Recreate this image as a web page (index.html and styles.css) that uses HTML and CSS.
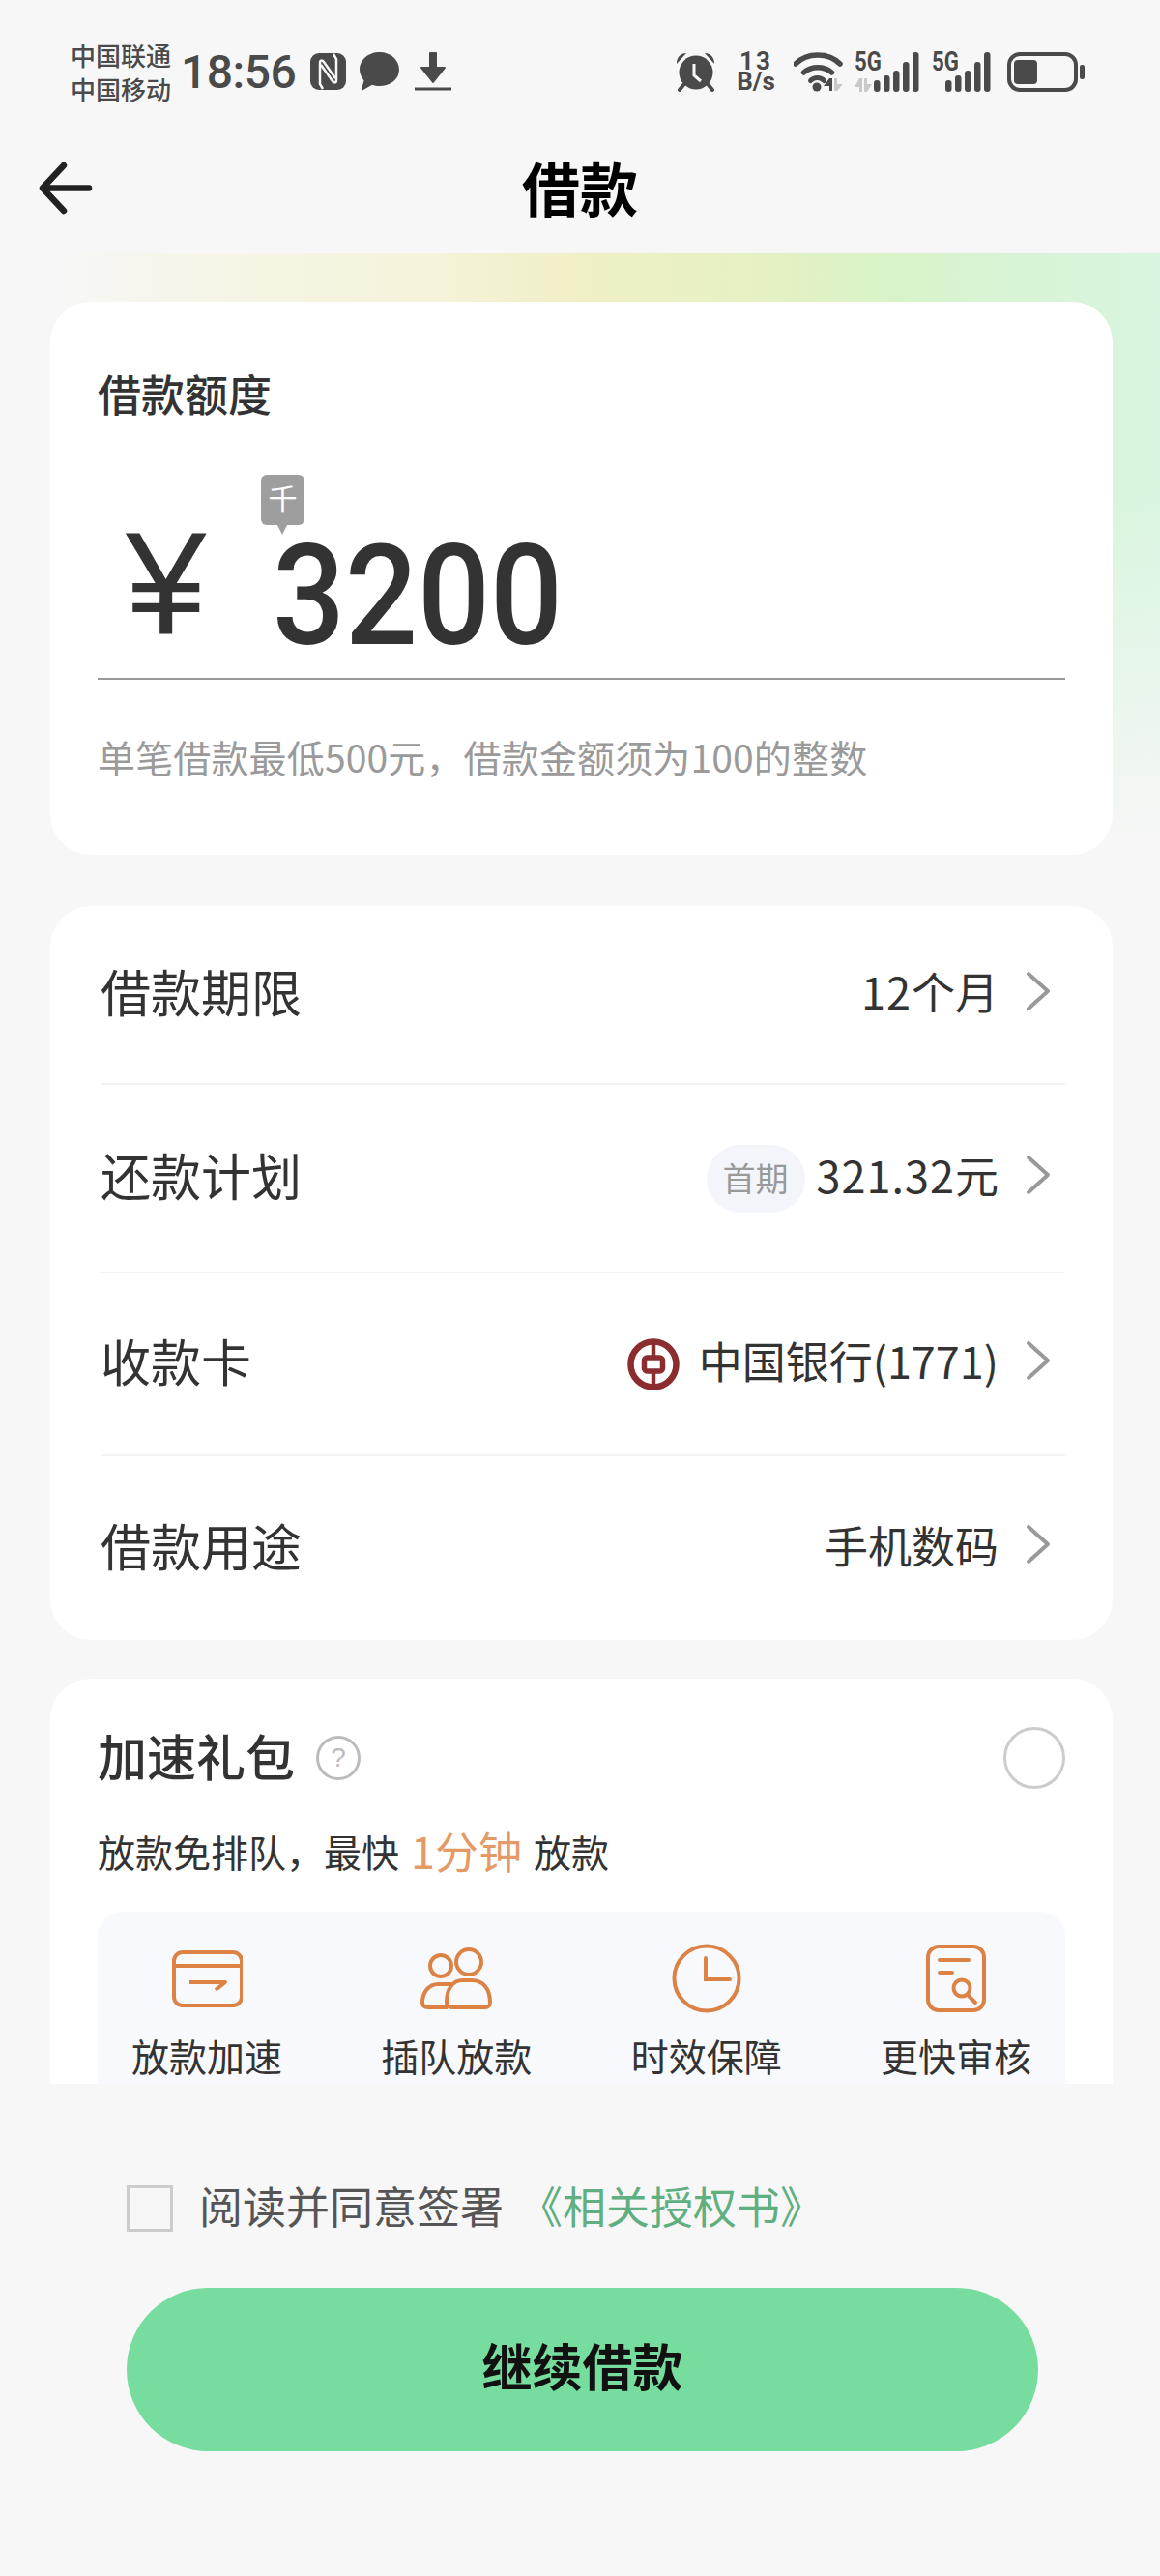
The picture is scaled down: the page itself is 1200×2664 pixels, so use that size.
FILE: index.html
```html
<!DOCTYPE html>
<html lang="zh-CN">
<head>
  <meta charset="UTF-8">
  <title>借款</title>
  <meta name="viewport" content="width=device-width,initial-scale=1,user-scalable=no"/>
  <link rel="stylesheet" href="styles.css">
</head>
<body>
<div class="status">
  <div class="carrier">
    <div>中国联通</div>
    <div>中国移动</div>
  </div>
  <div class="time">18:56</div>
  <svg class="ic-nfc" width="37" height="38" viewBox="0 0 37 38">
    <rect width="37" height="38" rx="9" fill="#4a4a4a"/>
    <path d="M13 37l-3-5V10c0-3 2-3 4-1l12 17" fill="none" stroke="#f7f7f7" stroke-width="2.500"/>
    <path d="M24 1l3 5v22c0 3-2 3-4 1L11 12" fill="none" stroke="#f7f7f7" stroke-width="2.500"/>
  </svg>
  <svg class="ic-msg" width="41" height="40" viewBox="0 0 41 40">
    <path d="M20.500 0C32 0 41 8 41 18S32 35 20.500 35c-2.500 0-5-.3-7.500-1.200L3 39.500c-1 .5-1.500 0-1-1l2.500-9C2 26 0 22 0 18 0 8 9 0 20.500 0z" fill="#4a4a4a"/>
  </svg>
  <svg class="ic-down" width="38" height="40" viewBox="0 0 38 40">
    <path d="M16 1h6v15h9L19 31 7 16h9z" fill="#4a4a4a" stroke="#4a4a4a" stroke-width="2" stroke-linejoin="round"/>
    <rect y="36.500" width="38" height="3" fill="#4a4a4a"/>
  </svg>
  <div class="status-right">
    <svg class="ic-alarm" width="41" height="41" viewBox="0 0 41 41">
      <circle cx="21" cy="21" r="17.500" fill="#4a4a4a"/>
      <path d="M1 12C1 5 5 1 11 1zM40 12C40 5 36 1 30 1z" fill="#4a4a4a"/>
      <path d="M8 34l-4 5M34 34l4 5" stroke="#4a4a4a" stroke-width="4" fill="none" stroke-linecap="round"/>
      <path d="M19 12v12l7 6" stroke="#f7f7f7" stroke-width="3" fill="none"/>
    </svg>
    <div class="speed">
      <div class="speed-num">13</div>
      <div>B/s</div>
    </div>
    <svg class="ic-wifi" width="52" height="41" viewBox="0 0 52 41">
      <path d="M2 12C14 0 36 0 48 12" fill="none" stroke="#4a4a4a" stroke-width="5.500" stroke-linecap="round"/>
      <path d="M10.500 21c8-7 21-7 29 0" fill="none" stroke="#4a4a4a" stroke-width="5.500" stroke-linecap="round"/>
      <path d="M17.500 29.500c4-4 10-4 14 0" fill="none" stroke="#4a4a4a" stroke-width="5" stroke-linecap="round"/>
      <circle cx="24" cy="36" r="4.500" fill="#4a4a4a"/>
      <path d="M37 27h3v13h-3v-5h-6z" fill="#4a4a4a"/>
      <path d="M42 27h3v6h6l-6 7h-3z" fill="#c9c9c9"/>
    </svg>
    <div class="sim sim-first">
      <span class="sim-text">5G</span>
      <svg width="67" height="41" viewBox="0 0 67 41">
        <path d="M5 27h3v14H5v-5H0z" fill="#c9c9c9"/>
        <path d="M10 27h3v6h5l-5 8h-3z" fill="#c9c9c9"/>
        <rect x="20" y="29" width="6.500" height="12" rx="3" fill="#4a4a4a"/>
        <rect x="30" y="24" width="6.500" height="17" rx="3" fill="#4a4a4a"/>
        <rect x="40" y="19" width="6.500" height="22" rx="3" fill="#4a4a4a"/>
        <rect x="50" y="10" width="6.500" height="31" rx="3" fill="#4a4a4a"/>
        <rect x="60" y="0" width="6.500" height="41" rx="3" fill="#4a4a4a"/>
      </svg>
    </div>
    <div class="sim sim-second">
      <span class="sim-text">5G</span>
      <svg width="61" height="41" viewBox="0 0 61 41">
        <rect x="14" y="29" width="6.500" height="12" rx="3" fill="#4a4a4a"/>
        <rect x="24" y="24" width="6.500" height="17" rx="3" fill="#4a4a4a"/>
        <rect x="34" y="19" width="6.500" height="22" rx="3" fill="#4a4a4a"/>
        <rect x="44" y="10" width="6.500" height="31" rx="3" fill="#4a4a4a"/>
        <rect x="54" y="0" width="6.500" height="41" rx="3" fill="#4a4a4a"/>
      </svg>
    </div>
    <svg class="ic-battery" width="81" height="41" viewBox="0 0 81 41">
      <rect x="3" y="2" width="69" height="37" rx="11" fill="none" stroke="#4a4a4a" stroke-width="4"/>
      <rect x="8" y="8" width="24" height="25" rx="4" fill="#4a4a4a"/>
      <rect x="76" y="13" width="5" height="15" rx="2" fill="#4a4a4a"/>
    </svg>
  </div>
</div>

<div class="nav">
  <svg class="back" width="56" height="56" viewBox="0 0 56 56">
    <path d="M52 26.500H5M26 3L4 26.500 26 50" fill="none" stroke="#222" stroke-width="6.500" stroke-linecap="round" stroke-linejoin="round"/>
  </svg>
  <div class="nav-title">借款</div>
</div>

<div class="main">
  <div class="card quota">
    <div class="quota-title">借款额度</div>
    <div class="amount">
      <span class="yen">¥</span>
      <div class="num-box">
        <div class="num">3200</div>
        <span class="unit">千</span>
      </div>
    </div>
    <div class="hint">单笔借款最低500元，借款金额须为100的整数</div>
  </div>

  <div class="card rows">
    <div class="row">
      <span class="row-label">借款期限</span>
      <span class="row-value"><span class="digits">12</span>个月</span>
      <svg class="arrow" width="26" height="42" viewBox="0 0 26 42"><path d="M3 3l20 18L3 39" fill="none" stroke="#999" stroke-width="4" stroke-linecap="round" stroke-linejoin="round"/></svg>
    </div>
    <div class="row">
      <span class="row-label">还款计划</span>
      <span class="tag">首期</span>
      <span class="row-value"><span class="digits">321.32</span>元</span>
      <svg class="arrow" width="26" height="42" viewBox="0 0 26 42"><path d="M3 3l20 18L3 39" fill="none" stroke="#999" stroke-width="4" stroke-linecap="round" stroke-linejoin="round"/></svg>
    </div>
    <div class="row">
      <span class="row-label">收款卡</span>
      <svg class="bank" width="54" height="54" viewBox="0 0 54 54">
        <circle cx="27" cy="27" r="23.500" fill="none" stroke="#8b2d2f" stroke-width="6.500"/>
        <rect x="17.500" y="20" width="19" height="14" rx="3" fill="none" stroke="#8b2d2f" stroke-width="5.500"/>
        <path d="M27 3v15M27 36v15" stroke="#8b2d2f" stroke-width="4.500"/>
      </svg>
      <span class="row-value">中国银行(1771)</span>
      <svg class="arrow" width="26" height="42" viewBox="0 0 26 42"><path d="M3 3l20 18L3 39" fill="none" stroke="#999" stroke-width="4" stroke-linecap="round" stroke-linejoin="round"/></svg>
    </div>
    <div class="row">
      <span class="row-label">借款用途</span>
      <span class="row-value">手机数码</span>
      <svg class="arrow" width="26" height="42" viewBox="0 0 26 42"><path d="M3 3l20 18L3 39" fill="none" stroke="#999" stroke-width="4" stroke-linecap="round" stroke-linejoin="round"/></svg>
    </div>
  </div>

  <div class="card gift">
    <div class="gift-head">
      <span class="gift-title">加速礼包</span>
      <span class="help">?</span>
      <span class="radio"></span>
    </div>
    <div class="gift-sub">放款免排队，最快<em>1分钟</em>放款</div>
    <div class="panel">
      <div class="perk">
        <svg width="74" height="72" viewBox="0 0 74 72">
          <rect x="3" y="9" width="70" height="55" rx="9" fill="none" stroke="#dd8245" stroke-width="4"/>
          <path d="M3 23h70" stroke="#dd8245" stroke-width="4"/>
          <path d="M19 40h37l-10 8" fill="none" stroke="#dd8245" stroke-width="4" stroke-linejoin="round"/>
        </svg>
        <div>放款加速</div>
      </div>
      <div class="perk">
        <svg width="74" height="72" viewBox="0 0 74 72">
          <circle cx="21" cy="23" r="11" fill="none" stroke="#dd8245" stroke-width="4"/>
          <circle cx="50" cy="19" r="13" fill="none" stroke="#dd8245" stroke-width="4"/>
          <path d="M28 66H8c-4 0-6-2-6-5 0-11 7-19 16-19h14" fill="none" stroke="#dd8245" stroke-width="4"/>
          <path d="M33 66c-4 0-6-2-6-5 0-14 6-23 17-23h9c12 0 19 9 19 23 0 3-2 5-5 5z" fill="none" stroke="#dd8245" stroke-width="4"/>
        </svg>
        <div>插队放款</div>
      </div>
      <div class="perk">
        <svg width="74" height="72" viewBox="0 0 74 72">
          <circle cx="37" cy="36" r="33.500" fill="none" stroke="#dd8245" stroke-width="4"/>
          <path d="M36 15v22h25" fill="none" stroke="#dd8245" stroke-width="4" stroke-linecap="round"/>
        </svg>
        <div>时效保障</div>
      </div>
      <div class="perk">
        <svg width="74" height="72" viewBox="0 0 74 72">
          <rect x="8" y="3" width="58" height="66" rx="11" fill="none" stroke="#dd8245" stroke-width="4"/>
          <path d="M20 17h30M20 30h13" stroke="#dd8245" stroke-width="4" stroke-linecap="round"/>
          <circle cx="43" cy="46" r="8.500" fill="none" stroke="#dd8245" stroke-width="4"/>
          <path d="M49 53l8 8" stroke="#dd8245" stroke-width="4" stroke-linecap="round"/>
        </svg>
        <div>更快审核</div>
      </div>
    </div>
  </div>
</div>

<div class="footer">
  <div class="agree">
    <span class="check"></span>
    <span class="agree-text">阅读并同意签署</span>
    <span class="agree-link">《相关授权书》</span>
  </div>
  <div class="btn">继续借款</div>
</div>
</body>
</html>
```

FILE: styles.css
```css
/* global styles */
* {
  box-sizing: border-box;
}

html,
body {
  margin: 0;
  padding: 0;
}

body {
  width: 1200px;
  height: 2664px;
  display: flex;
  flex-direction: column;
  overflow: hidden;
  font-family: "Noto Sans CJK SC", "Noto Sans", sans-serif;
  color: #333;
  background: #f7f7f7;
}

/* status bar */
.status {
  height: 130px;
  display: flex;
  align-items: center;
  padding: 18px 78px 0 73px;
  color: #4a4a4a;
  flex: none;
}

.carrier {
  font-size: 26px;
  line-height: 35px;
  font-weight: 500;
  width: 114px;
}

.time {
  font-family: Roboto, sans-serif;
  font-size: 48px;
  font-weight: 500;
  letter-spacing: -.5px;
  width: 134px;
}

.ic-msg {
  margin-left: 14px;
}

.ic-down {
  margin-left: 16px;
}

.status-right {
  margin-left: auto;
  display: flex;
  align-items: center;
}

.speed {
  width: 42px;
  margin-left: 21px;
  font-family: Roboto, sans-serif;
  font-size: 26px;
  line-height: 21px;
  font-weight: 700;
  text-align: center;
  white-space: nowrap;
}

.speed-num {
  letter-spacing: 2px;
}

.ic-wifi {
  margin-left: 18px;
}

.sim {
  position: relative;
  height: 41px;
}

.sim svg {
  display: block;
}

.sim-first {
  margin-left: 11px;
}

.sim-second {
  margin-left: 13px;
}

.ic-battery {
  margin-left: 16px;
}

.sim-text {
  position: absolute;
  left: 0;
  top: 0;
  font-family: Roboto, sans-serif;
  font-size: 27px;
  line-height: 20px;
  font-weight: 700;
  transform: scaleX(.82);
  transform-origin: left top;
}

/* nav */
.nav {
  height: 132px;
  flex: none;
  display: flex;
  align-items: center;
  justify-content: center;
  position: relative;
}

.back {
  position: absolute;
  left: 40px;
  top: 38px;
}

.nav-title {
  font-size: 60px;
  font-weight: 700;
  color: #000;
  line-height: 80px;
  padding-bottom: 6px;
}

/* content */
.main {
  height: 1893px;
  flex: none;
  overflow: hidden;
  padding: 50px 49px 0 52px;
  background:
    linear-gradient(to bottom, rgba(247, 247, 247, 0) 0, rgba(247, 247, 247, 0) 240px, #f7f7f7 620px) no-repeat,
    linear-gradient(to right, #f7f7f7 60px, #f6f5e9 190px, #f5f3d9 450px, #f0efc6 600px, #e4f1c4 800px, #d9f3c8 920px, #d8f4d6 1050px, #d8f5df 1200px) no-repeat;
  background-size: 100% 640px;
}

.card {
  background: #fff;
  border-radius: 42px;
}

.quota {
  height: 572px;
  padding: 0 49px;
}

.quota-title {
  font-size: 45px;
  line-height: 48px;
  padding-top: 71px;
  height: 122px;
  font-weight: 500;
}

.amount {
  height: 269px;
  border-bottom: 2px solid #999;
  display: flex;
  align-items: center;
  padding: 97px 0 0 29px;
}

.yen {
  font-family: "Liberation Sans", sans-serif;
  font-size: 150px;
  line-height: 1;
  width: 152px;
  margin-bottom: 26px;
}

.num-box {
  position: relative;
  height: 110px;
}

.num {
  font-family: Roboto, sans-serif;
  font-size: 145px;
  font-weight: 500;
  line-height: 110px;
  transform: scaleX(.91);
  transform-origin: left center;
}

.unit {
  position: absolute;
  left: -12px;
  top: -70px;
  width: 45px;
  height: 52px;
  background: #9e9e9e;
  border-radius: 6px;
  color: #fff;
  font-size: 30px;
  line-height: 46px;
  text-align: center;
}

.unit::after {
  content: "";
  position: absolute;
  left: 16px;
  top: 50px;
  border-left: 6px solid transparent;
  border-right: 6px solid transparent;
  border-top: 12px solid #9e9e9e;
}

.hint {
  font-size: 39px;
  letter-spacing: .15px;
  color: #9a9a9a;
  line-height: 50px;
  padding-top: 54px;
}

.rows {
  margin-top: 53px;
  height: 759px;
  padding: 0 49px 0 52px;
}

.row {
  display: flex;
  align-items: center;
  height: 185px;
  border-bottom: 2px solid #f3f3f3;
  padding: 0 15px 8px 0;
}

.row:nth-child(2) {
  height: 195px;
}

.row:nth-child(3) {
  height: 189px;
}

.row:nth-child(4) {
  height: 190px;
  border-bottom: 0;
}

.row-label {
  font-size: 52px;
  margin-right: auto;
}

.row-value {
  font-size: 45px;
}

.digits {
  letter-spacing: 1px;
}

.arrow {
  margin-left: 28px;
}

.tag {
  width: 102px;
  height: 70px;
  line-height: 68px;
  border-radius: 35px;
  background: #f3f5fa;
  color: #999;
  font-size: 34px;
  text-align: center;
  margin: 8px 12px 0 0;
}

.bank {
  margin: 8px 20px 0 0;
}

.gift {
  margin-top: 40px;
  height: 560px;
  padding: 0 49px;
}

.gift-head {
  display: flex;
  align-items: center;
  padding-top: 50px;
  height: 114px;
}

.gift-title {
  font-size: 51px;
  font-weight: 500;
  margin-bottom: 6px;
}

.help {
  width: 46px;
  height: 46px;
  margin-left: 22px;
  border: 3px solid #bbb;
  border-radius: 50%;
  color: #bbb;
  font-family: "Liberation Sans", sans-serif;
  font-size: 28px;
  line-height: 40px;
  text-align: center;
}

.radio {
  width: 64px;
  height: 64px;
  margin-left: auto;
  border: 3px solid #ccc;
  border-radius: 50%;
}

.gift-sub {
  font-size: 39px;
  line-height: 60px;
  margin-top: 34px;
  display: flex;
  align-items: center;
}

.gift-sub em {
  font-style: normal;
  font-size: 45px;
  color: #e49a66;
  margin: 0 12px;
}

.panel {
  margin-top: 33px;
  height: 240px;
  background: #f8f9fd;
  border-radius: 26px;
  padding: 33px 35px 0;
  display: flex;
  justify-content: space-between;
}

.perk {
  width: 156px;
  font-size: 39px;
  line-height: 50px;
  text-align: center;
  white-space: nowrap;
}

.perk svg {
  display: block;
  margin: 0 auto 18px;
}

/* bottom */
.footer {
  flex: 1;
  background: #f7f7f7;
  padding: 105px 126px 0 131px;
}

.agree {
  display: flex;
  align-items: center;
  height: 48px;
  font-size: 45px;
  color: #555;
}

.check {
  width: 48px;
  height: 48px;
  border: 3px solid #ccc;
  margin-right: 27px;
}

.agree-text,
.agree-link {
  padding-bottom: 7px;
}

.agree-link {
  color: #5faf80;
  margin-left: 16px;
}

.btn {
  margin-top: 58px;
  height: 169px;
  border-radius: 85px;
  background: #77dd9f;
  color: #111;
  font-size: 52px;
  font-weight: 700;
  line-height: 159px;
  text-align: center;
}
```
